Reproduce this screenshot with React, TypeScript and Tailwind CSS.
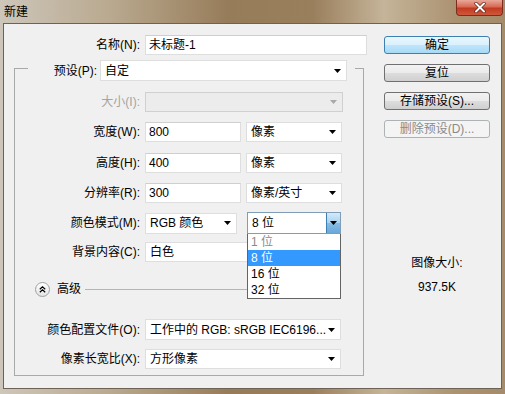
import React from 'react';

const font = "font-['Liberation_Sans','Noto_Sans_CJK_SC',sans-serif] text-[12px] leading-[16px]";

function Arrow({ muted }: { muted?: boolean }) {
  return (
    <svg width="7" height="4" viewBox="0 0 7 4" className="shrink-0">
      <polygon points="0,0 7,0 3.5,4" fill={muted ? '#a8a8a8' : '#000'} />
    </svg>
  );
}

function Field({ value, w }: { value: string; w: string }) {
  return (
    <div className={`${w} h-full bg-white border border-[#dedede] border-t-[#cfcfcf] pl-[3px] flex items-center`}>
      {value}
    </div>
  );
}

function Select({ value, w, disabled }: { value: string; w: string; disabled?: boolean }) {
  return (
    <div
      className={`${w} h-full border flex items-center pl-[4px] pr-[5px] ${
        disabled ? 'bg-[#ececec] border-[#d0d0d0]' : 'bg-white border-[#dedede]'
      }`}
    >
      <span className="flex-1 truncate">{value}</span>
      <Arrow muted={disabled} />
    </div>
  );
}

function Row({ label, mt, h, disabled, children }: { label: string; mt: string; h: string; disabled?: boolean; children: React.ReactNode }) {
  return (
    <div className={`flex items-center ${mt} ${h}`}>
      <div className={`w-[125px] text-right ${disabled ? 'text-[#a3a3a3]' : 'text-black'}`}>{label}</div>
      <div className="ml-[5px] flex h-full items-center gap-[5px]">{children}</div>
    </div>
  );
}

function Btn({ label, kind }: { label: string; kind?: 'default' | 'disabled' }) {
  const cls =
    kind === 'default'
      ? 'border-[#3c7fb1] bg-[linear-gradient(180deg,#eaf6fd_0%,#d9f0fc_50%,#bee6fd_51%,#a7d9f5_100%)] text-black'
      : kind === 'disabled'
      ? 'border-[#adb2b5] bg-[#f4f4f4] text-[#8a8a8a]'
      : 'border-[#707070] bg-[linear-gradient(180deg,#f2f2f2_0%,#ebebeb_50%,#dddddd_51%,#cfcfcf_100%)] text-black';
  return (
    <div className={`h-[18px] w-full rounded-[3px] border flex items-center justify-center ${cls}`}>{label}</div>
  );
}

export default function App() {
  return (
    <div
      className={`${font} w-[505px] h-[394px] flex flex-col bg-[linear-gradient(90deg,#cdc6ba_0%,#b9a98f_22%,#977c5a_45%,#9a7f5d_62%,#c5b499_76%,#ab9372_90%,#a48b69_100%)]`}
    >
      {/* Title bar */}
      <div className="h-[23px] flex items-start shrink-0">
        <span className="ml-[4px] mt-[4px] text-black">新建</span>
        <div className="ml-auto mr-[2px] w-[47px] h-[16px] rounded-b-[4px] border border-t-0 border-[#7b2d1f] bg-[linear-gradient(180deg,#e9a99a_0%,#d86a52_45%,#c13a22_55%,#d0583c_100%)] flex items-center justify-center">
          <svg width="12" height="11" viewBox="0 0 12 11">
            <path d="M2 1.5 L10 9.5 M10 1.5 L2 9.5" stroke="#5a1a10" strokeWidth="3.2" strokeLinecap="round" />
            <path d="M2 1.5 L10 9.5 M10 1.5 L2 9.5" stroke="#fff" strokeWidth="2" strokeLinecap="round" />
          </svg>
        </div>
      </div>

      {/* Client area */}
      <div className="ml-[3px] mr-[3px] mb-[5px] flex-1 bg-[#f0f0f0] border border-[#6e6254] flex">
        {/* Left column */}
        <div className="w-[370px] flex flex-col">
          <div className="mt-[11px] h-[20px] flex items-center">
            <div className="w-[136px] text-right">名称(N):</div>
            <div className="ml-[5px] h-full">
              <Field value="未标题-1" w="w-[222px]" />
            </div>
          </div>

          {/* Group box */}
          <div className="mt-[5px] ml-[10px] w-[350px] flex flex-col">
            <div className="h-[21px] flex items-start">
              <div className="w-[14px] h-[13px] mt-[8px] border-t border-l border-[#a9a9a9]" />
              <div className="w-[69px] h-full flex items-center justify-end">预设(P):</div>
              <div className="ml-[3px] h-full">
                <Select value="自定" w="w-[247px]" />
              </div>
              <div className="ml-[8px] flex-1 h-[13px] mt-[8px] border-t border-r border-[#a9a9a9]" />
            </div>
            <div className="border-l border-r border-b border-[#a9a9a9] flex flex-col pb-[6px]">
              <Row label="大小(I):" mt="mt-[11px]" h="h-[20px]" disabled>
                <Select value="" w="w-[198px]" disabled />
              </Row>
              <Row label="宽度(W):" mt="mt-[10px]" h="h-[20px]">
                <Field value="800" w="w-[96px]" />
                <Select value="像素" w="w-[96px]" />
              </Row>
              <Row label="高度(H):" mt="mt-[11px]" h="h-[20px]">
                <Field value="400" w="w-[96px]" />
                <Select value="像素" w="w-[96px]" />
              </Row>
              <Row label="分辨率(R):" mt="mt-[10px]" h="h-[20px]">
                <Field value="300" w="w-[96px]" />
                <Select value="像素/英寸" w="w-[96px]" />
              </Row>
              <Row label="颜色模式(M):" mt="mt-[9px]" h="h-[22px]">
                <div className="h-[21px]">
                  <Select value="RGB 颜色" w="w-[92px]" />
                </div>
                <div className="relative ml-[5px] w-[94px] h-full">
                  <div className="h-full bg-white border border-[#7f9db9] flex items-center pl-[4px]">
                    <span className="flex-1">8 位</span>
                    <div className="w-[14px] h-full border-l border-[#3c7fb1] bg-[linear-gradient(180deg,#d3eafa_0%,#a9d2ef_50%,#86bde6_51%,#6aa8d9_100%)] flex items-center justify-center">
                      <Arrow />
                    </div>
                  </div>
                  {/* Open dropdown list */}
                  <div className="absolute left-0 top-full w-full bg-white border border-t-0 border-[#646464] flex flex-col z-10">
                    <div className="h-[16px] pl-[3px] flex items-center text-[#8a8a8a]">1 位</div>
                    <div className="h-[16px] pl-[3px] flex items-center bg-[#3399ff] text-white">8 位</div>
                    <div className="h-[16px] pl-[3px] flex items-center">16 位</div>
                    <div className="h-[16px] pl-[3px] flex items-center">32 位</div>
                  </div>
                </div>
              </Row>
              <Row label="背景内容(C):" mt="mt-[8px]" h="h-[20px]">
                <Select value="白色" w="w-[196px]" />
              </Row>

              {/* Advanced */}
              <div className="mt-[19px] h-[16px] flex items-center">
                <div className="ml-[20px] w-[15px] h-[15px] rounded-full border border-[#a0a0a0] bg-[linear-gradient(180deg,#ffffff_0%,#e4e4e4_100%)] flex items-center justify-center">
                  <svg width="7" height="7" viewBox="0 0 7 7">
                    <path d="M0.8 3.2 L3.5 0.8 L6.2 3.2 M0.8 6.2 L3.5 3.8 L6.2 6.2" stroke="#000" strokeWidth="1.2" fill="none" />
                  </svg>
                </div>
                <span className="ml-[7px]">高级</span>
                <div className="ml-[4px] w-[256px] border-t border-[#b5b5b5]" />
              </div>

              <Row label="颜色配置文件(O):" mt="mt-[22px]" h="h-[21px]">
                <Select value="工作中的 RGB: sRGB IEC6196..." w="w-[196px]" />
              </Row>
              <Row label="像素长宽比(X):" mt="mt-[9px]" h="h-[20px]">
                <Select value="方形像素" w="w-[196px]" />
              </Row>
            </div>
          </div>
        </div>

        {/* Right column */}
        <div className="ml-[10px] w-[106px] flex flex-col items-center">
          <div className="mt-[12px] w-full flex flex-col gap-[10px]">
            <Btn label="确定" kind="default" />
            <Btn label="复位" />
            <Btn label="存储预设(S)..." />
            <Btn label="删除预设(D)..." kind="disabled" />
          </div>
          <div className="mt-[117px]">图像大小:</div>
          <div className="mt-[8px]">937.5K</div>
        </div>
      </div>
    </div>
  );
}
